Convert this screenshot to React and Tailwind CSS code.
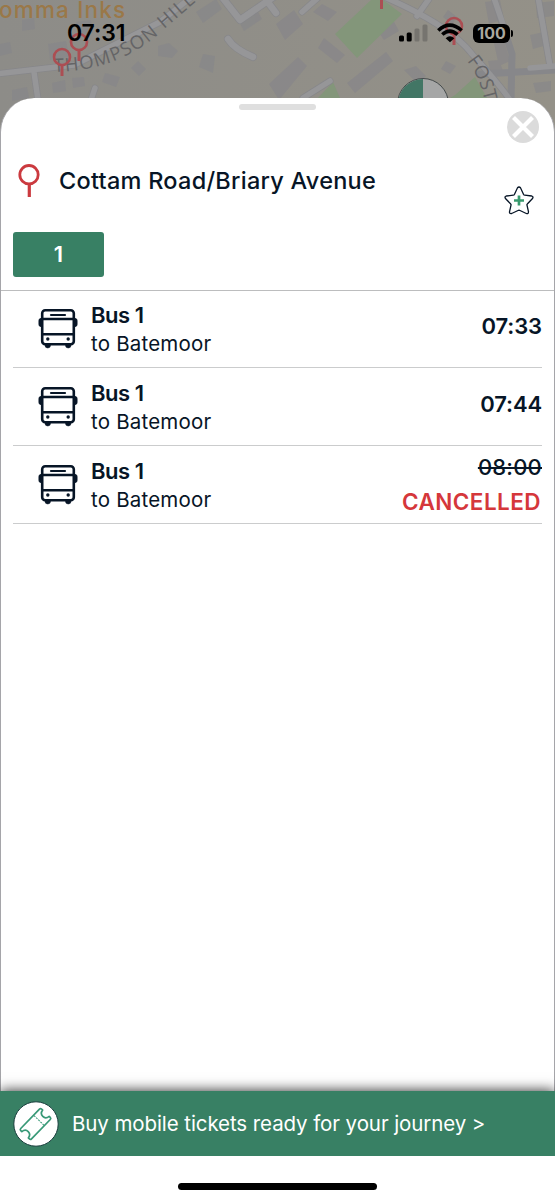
const departures = [
  { time: '07:33', cancelled: false },
  { time: '07:44', cancelled: false },
  { time: '08:00', cancelled: true },
];

function Pin({ x, y }) {
  return (
    <g transform={`translate(${x} ${y})`} fill="none" stroke="#ab4e53" strokeWidth="2.600">
      <circle r="8" />
      <path d="M0 8V19" strokeWidth="3" />
    </g>
  );
}

function MapBackdrop() {
  return (
    <svg className="absolute top-0 left-0" width="555" height="160" viewBox="0 0 555 160">
      <defs>
        <linearGradient id="ground" x1="0" x2="1" y1="0" y2="0">
          <stop offset="0" stopColor="#8d8c88" />
          <stop offset="1" stopColor="#949188" />
        </linearGradient>
        <path id="thompson" d="M54 72C95 71 127 60 155 37L215 -15" />
        <path id="foster" d="M467 61Q481 77 487 112" />
      </defs>
      <rect width="555" height="160" fill="url(#ground)" />
      <g fill="#86858a" opacity=".6">
        <path d="M0 44l10-2 2 11-12 3zM22 20l12-2 1 11-13 2zM48 44l18-3 3 16-19 3zM76 22l15-2 2 13-15 2zM105 73l15 4-4 10-14-5zM138 61l8 8-7 7-8-8zM158 46l11-3 9 8-6 7-14-2zM203 54l12 2-2 17-14-6zM196 12l20-13 6 10-19 14zM239 22l18-12 5 9-18 12zM269 84l29-27 9 9-28 34zM12 90l15-3 2 11-17 3zM52 83l13-3 1 11-13 2zM72 78l12-1 1 9-12 2z" />
        <path d="M276 24l18-14 9 14-18 16zM324 38l21 17-8 8-19-15zM347 83l39-31 7 9-38 32zM404 70l12-4 10 10-8 8zM446 61l10 5-6 8-9-5zM485 2l15-2 4 19-15 5zM494 43l10-2 6 20-11 5zM488 61l11-1 4 11-12 3zM448 10l9 7-5 7-9-7zM322 4l15 8-9 9-15-9zM530 35l14-3 3 13-14 4zM536 3l18-2v15l-17 2zM533 83l18-2v10l-15 2zM376 28l17-8 6 11-15 9z" />
      </g>
      <g fill="#83967a">
        <path d="M371 0h12l19 14-45 44-22-24zM455 95l20-18 12 21h-37zM318 98l15-16 7 16z" />
      </g>
      <g fill="none" stroke="#87878a" strokeLinecap="round" strokeLinejoin="round">
        <path d="M-5 74L74 65L160 22L194-5M34 72L38 100M95 88L91 100" strokeWidth="7" />
        <path d="M218-8L240 20L275-4M228 39Q234 49 253 57M264-3L276 13" strokeWidth="8" />
        <path d="M302 12L320-4M303 98L330 81M380-5Q450 25 472 54Q500 85 510 100M417 16L431-4M493-5L512 54L511 100M480 74L555 70M538-3L550 66" strokeWidth="7" />
      </g>
      <g fill="none" stroke="#969698" strokeLinecap="round" strokeLinejoin="round">
        <path d="M-5 74L74 65L160 22L194-5M34 72L38 100M95 88L91 100" strokeWidth="5.500" />
        <path d="M218-8L240 20L275-4M228 39Q234 49 253 57M264-3L276 13" strokeWidth="6.500" />
        <path d="M302 12L320-4M303 98L330 81M380-5Q450 25 472 54Q500 85 510 100M417 16L431-4M530 68L555 66M538-3L550 66M493-5L505 30" strokeWidth="5.500" />
      </g>
      <text x="-1" y="17.500" fill="#9a7848" fontFamily="Inter, sans-serif" fontSize="22.500" fontWeight="500" textLength="126">omma Inks</text>
      <text fill="#646466" fontFamily="'Open Sans', sans-serif" fontSize="18.500">
        <textPath href="#thompson" textLength="163">THOMPSON HILL</textPath>
      </text>
      <text fill="#646466" fontFamily="'Open Sans', sans-serif" fontSize="18.500">
        <textPath href="#foster">FOST</textPath>
      </text>
      <Pin x={79} y={42} />
      <Pin x={62} y={57} />
      <Pin x={454} y={26} />
      <path d="M381.500 0V9" stroke="#ab4e53" strokeWidth="3" />
      <circle cx="423" cy="104" r="25.500" fill="#a5a6a6" stroke="#454b4c" />
      <path d="M423 79A25 25 0 0 0 398 104H423Z" fill="#427665" />
    </svg>
  );
}

function StatusBar() {
  return (
    <div className="relative flex h-[98px] items-start justify-between pt-[21px] pr-[42px] pl-[67px]">
      <span className="text-[23px] leading-[25px] font-semibold tracking-[-0.1px] text-black">07:31</span>
      <div className="flex h-6 items-center">
        <svg width="30" height="20" viewBox="0 0 30 20" className="mr-2">
          <rect x="0" y="12.500" width="5" height="6" rx="1.500" />
          <rect x="7.700" y="9.500" width="5" height="9" rx="1.500" />
          <rect x="15.500" y="5.500" width="5" height="13" rx="1.500" fill="#76746f" />
          <rect x="23.500" y="1.500" width="5" height="17" rx="1.500" fill="#76746f" />
        </svg>
        <svg width="26" height="20" viewBox="0 0 26 20" className="mr-2.5" fill="none" stroke="#000" strokeWidth="3.500">
          <path d="M1.300 7.500Q12.500-3.300 24.700 7.500M5.300 11.600Q12.700 4.600 20.500 11.600" />
          <path d="M8.600 15.200Q13 11.300 17.400 15.200L13 19.300Z" fill="#000" stroke="none" />
        </svg>
        <div className="flex h-[19px] w-[37px] items-center justify-center rounded-[6px] bg-black text-[16px] leading-none font-bold text-[#aaa89f]">100</div>
        <div className="ml-px h-[7px] w-[2px] rounded-r-full bg-black" />
      </div>
    </div>
  );
}

function BusIcon() {
  return (
    <svg width="40" height="40" viewBox="0 0 40 40" fill="none" stroke="#071526" strokeWidth="2.600">
      <rect x="4.200" y="1.300" width="31.600" height="34" rx="3" />
      <path d="M4 10H36M4 25.200H36" />
      <path d="M13 6H27" strokeLinecap="round" strokeWidth="2.200" />
      <path d="M3.500 9.500V17.500H2.800Q1 17.500 1 15.500V11.500Q1 9.500 2.800 9.500ZM36.500 9.500V17.500H37.200Q39 17.500 39 15.500V11.500Q39 9.500 37.200 9.500Z" fill="#071526" strokeWidth="1" />
      <path d="M7 35H12.500V36.300Q12.500 39 9.800 39Q7 39 7 36.300ZM27.500 35H33V36.300Q33 39 30.200 39Q27.500 39 27.500 36.300Z" fill="#071526" strokeWidth=".5" />
      <circle cx="9.800" cy="30" r="1.700" fill="#071526" stroke="none" />
      <circle cx="30.200" cy="30" r="1.700" fill="#071526" stroke="none" />
    </svg>
  );
}

function Departure({ time, cancelled }) {
  return (
    <li className="flex h-[78px] items-start border-b border-[#cbcccd] pl-[25px]">
      <div className="mt-[19px]"><BusIcon /></div>
      <div className="ml-[13px] flex flex-1 flex-col pt-[11px]">
        <span className="text-[22px] leading-7 font-semibold tracking-[-0.45px]">Bus 1</span>
        <span className="mt-px text-[20.500px] leading-7 tracking-[0.200px]">to Batemoor</span>
      </div>
      {cancelled ? (
        <div className="flex flex-col items-end pt-[7px]">
          <span className="text-[22px] leading-7 font-medium tracking-[0.2px] line-through decoration-2">{time}</span>
          <span className="mt-[7px] -mr-px pr-[2px] text-[22.500px] leading-7 font-semibold tracking-[0.45px] text-[#d5373b]">CANCELLED</span>
        </div>
      ) : (
        <span className="pt-[22px] text-[22px] leading-7 font-semibold tracking-[-0.1px]">{time}</span>
      )}
    </li>
  );
}

export default function App() {
  return (
    <div className="relative flex h-[1200px] w-[555px] flex-col overflow-hidden bg-[#929189] font-['Inter',sans-serif] text-[#071526]">
      <MapBackdrop />
      <StatusBar />

      <main className="relative flex flex-1 flex-col overflow-hidden rounded-t-[34px] border-x border-[#a5a5a9] bg-white">
        <div className="mt-[6px] h-[6px] w-[77px] self-center rounded-full bg-[#dfdfdf]" />
        <button aria-label="Close" className="mr-[15px] self-end">
          <svg width="32" height="32" viewBox="0 0 32 32" className="translate-y-px">
            <circle cx="16" cy="16" r="16" fill="#dbdbdb" />
            <path d="M6.500 6.500L25.500 25.500M25.500 6.500L6.500 25.500" stroke="#fff" strokeWidth="4.200" />
          </svg>
        </button>

        <header className="flex h-[90px] items-start pt-[20px] pr-[20px] pl-[17px]">
          <svg width="22" height="34" viewBox="0 0 22 34" className="mt-[2px]" fill="none" stroke="#cb3a3f">
            <circle cx="11" cy="10.700" r="9.200" strokeWidth="2.800" />
            <path d="M11.300 20V33" strokeWidth="3.200" />
          </svg>
          <h1 className="mt-[3px] ml-[19px] flex-1 text-[23.500px] leading-8 font-medium tracking-[0.260px] whitespace-nowrap">Cottam Road/Briary Avenue</h1>
          <svg width="30" height="30" viewBox="0 0 30 30" className="mt-[24px]" fill="none">
            <path d="M13.500 1.800Q15 .2 16.500 1.800L19.600 8.500Q19.900 9.100 20.700 9.200L27.700 10Q29.800 10.700 28.500 12.500L23.300 18Q22.800 18.500 23 19.200L24.500 25.800Q24.500 28.200 22.300 27.500L16 24.500Q15 24 14 24.500L7.700 27.500Q5.300 28 5.500 25.800L7 19.200Q7.200 18.500 6.700 18L1.500 12.500Q.2 10.700 2.300 10L9.300 9.200Q10.100 9.100 10.400 8.500Z" stroke="#071526" strokeWidth="1.300" />
            <path d="M15 9.500V19.500M10 14.500H20" stroke="#399a6e" strokeWidth="2.700" />
          </svg>
        </header>

        <div className="h-[59px] border-b border-[#bcbdbe] pl-[12px]">
          <button className="flex h-[45px] w-[91px] items-center justify-center rounded-[3px] bg-[#388064] text-[22px] font-semibold text-white">1</button>
        </div>

        <ul className="-mt-px mx-[12px]">
          {departures.map((departure) => <Departure key={departure.time} {...departure} />)}
        </ul>
      </main>

      <a className="relative flex h-[65px] items-center bg-[#388064] pl-[13px] text-white shadow-[0_-1px_12px_rgba(0,0,0,0.75)]">
        <svg width="46" height="46" viewBox="0 0 46 46" fill="none">
          <circle cx="23" cy="23" r="22.200" fill="#fff" stroke="#173c3b" strokeWidth="1" />
          <g transform="translate(22.500 23) rotate(-46)" stroke="#389977" strokeWidth="1.700" strokeLinejoin="round">
            <path d="M-13.500-7.500H13.500Q15-7.500 15-6V-4.500Q10.500-4 10.500 0T15 4.500V6Q15 7.500 13.500 7.500H-13.500Q-15 7.500-15 6V4.500Q-10.500 4-10.500 0T-15-4.500V-6Q-15-7.500-13.500-7.500Z" />
            <path d="M5-7V7" strokeWidth="1" strokeDasharray="2 1" />
          </g>
        </svg>
        <span className="mt-px ml-[13px] text-[20.500px] leading-7 tracking-[-0.090px] whitespace-nowrap">Buy mobile tickets ready for your journey &gt;</span>
      </a>
      <footer className="relative flex h-[44px] justify-center bg-white pt-[27px]">
        <div className="h-[7px] w-[199px] rounded-full bg-black" />
      </footer>
    </div>
  );
}
